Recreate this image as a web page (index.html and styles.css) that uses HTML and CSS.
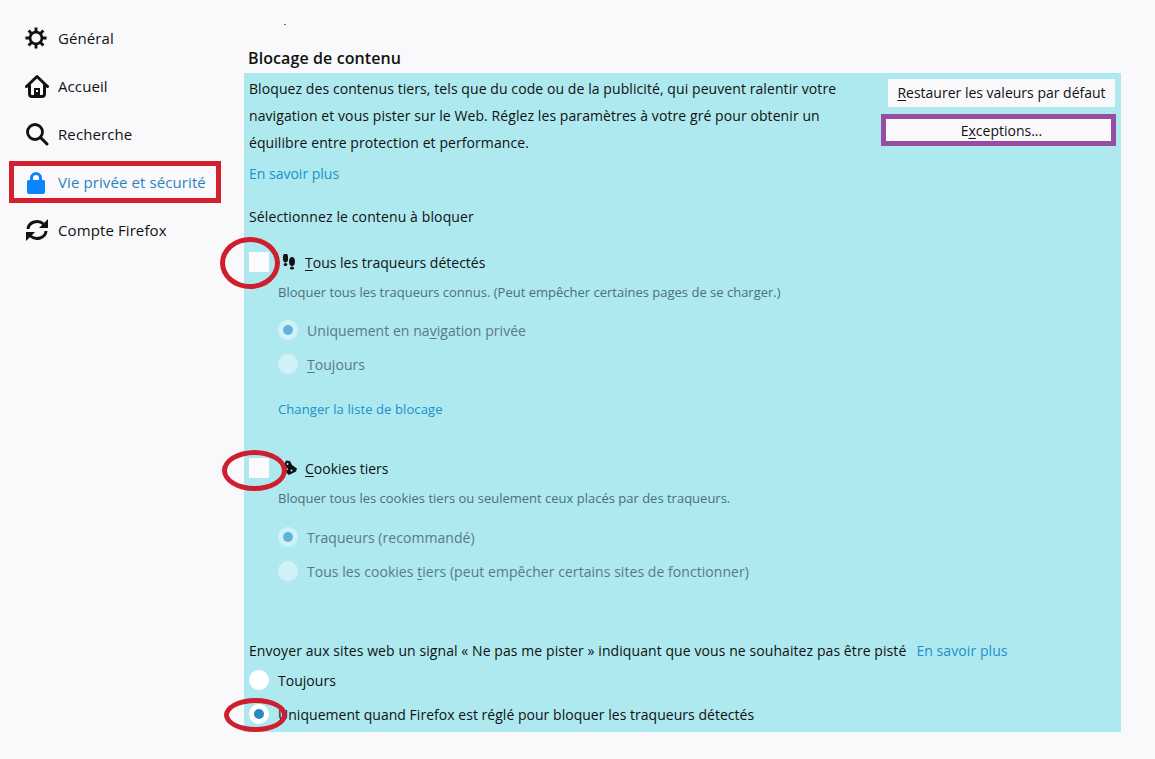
FILE: index.html
```html
<!DOCTYPE html>
<html>
   <head>
       <title>Vie privée et sécurité</title>
       <link rel="stylesheet" href="styles.css">
   </head>
   <body>
        <div class="page">
            <nav class="sidebar">
                <a class="nav_item">
                    <svg class="nav_icon" viewBox="0 0 24 24"><circle cx="12" cy="12" r="6.500" fill="none" stroke="#111" stroke-width="3"/><path stroke="#111" stroke-width="3.200" d="M12 .5v5M12 18.500v5M.5 12h5M18.500 12h5M3.900 3.900l3.500 3.500M16.600 16.600l3.500 3.500M3.900 20.100l3.500-3.500M16.600 7.400l3.500-3.500"/></svg>
                    <span>Général</span>
                </a>
                <a class="nav_item">
                    <svg class="nav_icon" viewBox="0 0 24 24"><path fill="none" stroke="#111" stroke-width="3" stroke-linejoin="round" stroke-linecap="round" d="M1.500 12.500 12 2.500l10.500 10"/><path fill="none" stroke="#111" stroke-width="3" d="M4.500 10.500v9.500a2.500 2.500 0 0 0 2.500 2.500h10a2.500 2.500 0 0 0 2.500-2.500v-9.500"/><path fill="#111" d="M9 14h6v8H9z"/><path fill="#f9f9fb" d="M11 16h2v2h-2z"/></svg>
                    <span>Accueil</span>
                </a>
                <a class="nav_item">
                    <svg class="nav_icon" viewBox="0 0 24 24"><circle cx="10" cy="10" r="7.500" fill="none" stroke="#111" stroke-width="2.800"/><path stroke="#111" stroke-width="3" stroke-linecap="round" d="M15.500 15.500 22 22"/></svg>
                    <span>Recherche</span>
                </a>
                <a class="nav_item nav_selected">
                    <svg class="nav_icon" viewBox="0 0 24 24"><path fill="#0a84ff" d="M6 10V8a6 6 0 0 1 12 0v2h1.500a1.500 1.500 0 0 1 1.500 1.500V22a2 2 0 0 1-2 2H5a2 2 0 0 1-2-2V11.500A1.500 1.500 0 0 1 4.500 10zm3 0h6V8a3 3 0 0 0-6 0z"/></svg>
                    <span>Vie privée et sécurité</span>
                </a>
                <a class="nav_item">
                    <svg class="nav_icon" viewBox="0 0 24 24"><path fill="none" stroke="#111" stroke-width="3" d="M3 11a9 8 0 0 1 15.500-5M21 13a9 8 0 0 1-15.500 5"/><path fill="#111" d="M23 1v9h-9zM1 23v-9h9z"/></svg>
                    <span>Compte Firefox</span>
                </a>
            </nav>

            <main class="content">
                <h2 class="section_title">Blocage de contenu</h2>
                <section class="panel">
                    <div class="intro">
                        <div class="intro_text">
                            <p class="description">Bloquez des contenus tiers, tels que du code ou de la publicité, qui peuvent ralentir votre navigation et vous pister sur le Web. Réglez les paramètres à votre gré pour obtenir un équilibre entre protection et performance.</p>
                            <a class="link learn_more">En savoir plus</a>
                        </div>
                        <div class="intro_buttons">
                            <div class="button"><u>R</u>estaurer les valeurs par défaut</div>
                            <div class="button button_marked">E<u>x</u>ceptions...</div>
                        </div>
                    </div>

                    <div class="choose_label">Sélectionnez le contenu à bloquer</div>

                    <div class="block_group trackers">
                        <div class="check_row">
                            <span class="checkbox"></span>
                            <svg class="row_icon" viewBox="0 0 16 16"><ellipse cx="3.500" cy="4" rx="2.600" ry="4.500" fill="#111"/><ellipse cx="3.500" cy="10.500" rx="1.800" ry="1.500" fill="#111"/><ellipse cx="10" cy="7.500" rx="2.900" ry="4.500" fill="#111"/><ellipse cx="10" cy="14" rx="2" ry="1.500" fill="#111"/></svg>
                            <span class="check_label"><u>T</u>ous les traqueurs détectés</span>
                        </div>
                        <div class="hint">Bloquer tous les traqueurs connus. (Peut empêcher certaines pages de se charger.)</div>
                        <div class="radio_row muted"><span class="radio radio_on"></span><span>Uniquement en na<u>v</u>igation privée</span></div>
                        <div class="radio_row muted"><span class="radio"></span><span><u>T</u>oujours</span></div>
                        <a class="link change_list">Changer la liste de blocage</a>
                    </div>

                    <div class="block_group cookies">
                        <div class="check_row">
                            <span class="checkbox"></span>
                            <svg class="row_icon" viewBox="0 0 16 16"><path fill="#111" d="M4 .5 8 1l2 4 5 3.500-1 3-7 3.500-4-3.500L1.500 6z"/><circle cx="5.500" cy="4" r=".9" fill="#ade9ef"/><circle cx="5" cy="9" r="1" fill="#ade9ef"/><circle cx="9.500" cy="10.500" r="1" fill="#ade9ef"/></svg>
                            <span class="check_label"><u>C</u>ookies tiers</span>
                        </div>
                        <div class="hint">Bloquer tous les cookies tiers ou seulement ceux placés par des traqueurs.</div>
                        <div class="radio_row muted"><span class="radio radio_on"></span><span>Traqueurs (recommandé)</span></div>
                        <div class="radio_row muted"><span class="radio"></span><span>Tous les cookies <u>t</u>iers (peut empêcher certains sites de fonctionner)</span></div>
                    </div>

                    <div class="dnt">
                        <div class="dnt_label"><span>Envoyer aux sites web un signal « Ne pas me pister » indiquant que vous ne souhaitez pas être pisté</span><a class="link">En savoir plus</a></div>
                        <div class="radio_row dnt_row"><span class="radio"></span><span>Toujours</span></div>
                        <div class="radio_row dnt_row"><span class="radio radio_strong"></span><span>Uniquement quand Firefox est réglé pour bloquer les traqueurs détectés</span></div>
                    </div>
                </section>
            </main>
        </div>

        <!-- annotation circles drawn over the screenshot -->
        <span class="ring ring1"></span>
        <span class="ring ring2"></span>
        <span class="ring ring3"></span>
        <span class="speck"></span>
    </body>
</html>
```

FILE: styles.css
```css
html, body {
  margin: 0;
  padding: 0;
}

body {
  position: relative;
  height: 759px;
  overflow: hidden;
  background-color: #f9f9fb;
  color: #111;
  font-family: "Open Sans", "Noto Sans", sans-serif;
  font-size: 14px;
}

u {
  text-underline-offset: 2px;
}

.page {
  display: flex;
}

.sidebar {
  width: 244px;
  padding: 14px 0 0 9px;
  box-sizing: border-box;
  flex-shrink: 0;
}

.nav_item {
  display: flex;
  align-items: center;
  gap: 9px;
  width: 212px;
  height: 48px;
  padding-left: 16px;
  box-sizing: border-box;
  font-size: 15px;
  letter-spacing: 0.1px;
}

.nav_icon {
  width: 24px;
  height: 24px;
  flex-shrink: 0;
}

.nav_item:first-child .nav_icon {
  width: 22px;
  height: 22px;
  margin-right: 2px;
}

.nav_selected {
  height: 42px;
  margin: 3px 0;
  padding-left: 10px;
  gap: 10px;
  border: 5px solid #d3202f;
  color: #2b83bd;
}

.content {
  width: 877px;
}

.section_title {
  margin: 0;
  padding: 48px 0 0 4px;
  height: 25px;
  font-size: 16px;
  font-weight: 600;
  letter-spacing: 0.1px;
  line-height: 20px;
}

.panel {
  height: 659px;
  padding-left: 5px;
  box-sizing: border-box;
  background-color: #ade9ef;
}

.intro {
  display: flex;
  justify-content: space-between;
}

.intro_text {
  width: 600px;
  padding-top: 2px;
}

.description {
  margin: 0;
  line-height: 27px;
  letter-spacing: 0.08px;
}

.link {
  color: #1c8fce;
}

.learn_more {
  display: block;
  margin-top: 8px;
  line-height: 20px;
}

.intro_buttons {
  display: flex;
  flex-direction: column;
  align-items: flex-end;
  gap: 7px;
  padding: 6px 5px 0 0;
}

.button {
  background-color: #f9f9fb;
  text-align: center;
  line-height: 28px;
  width: 227px;
  margin-right: 1px;
}

.button_marked {
  width: 235px;
  margin-right: 0;
  padding: 1px 0 0 6px;
  box-sizing: border-box;
  border: 5px solid #974ea2;
  line-height: 21px;
}

.choose_label {
  margin-top: 23px;
  line-height: 20px;
  letter-spacing: 0.12px;
}

.trackers {
  margin-top: 25px;
}

.cookies {
  margin-top: 39px;
}

.check_row {
  display: flex;
  align-items: center;
  height: 20px;
}

.checkbox {
  width: 20px;
  height: 20px;
  background-color: #fbfbfd;
  flex-shrink: 0;
}

.row_icon {
  width: 16px;
  height: 16px;
  margin: 0 7px 0 13px;
  flex-shrink: 0;
}

.hint {
  margin: 10px 0 0 29px;
  font-size: 13px;
  line-height: 20px;
  color: #4e6f78;
}

.radio_row {
  display: flex;
  align-items: center;
  gap: 9px;
  height: 20px;
  margin-left: 29px;
  margin-top: 14px;
  letter-spacing: 0.05px;
}

.trackers .hint + .radio_row {
  margin-top: 18px;
}

.cookies .hint + .radio_row {
  margin-top: 19px;
}

.muted {
  color: #5a7a82;
}

.radio {
  width: 20px;
  height: 20px;
  border-radius: 50%;
  background-color: #d2f1f5;
  flex-shrink: 0;
  display: flex;
  align-items: center;
  justify-content: center;
}

.radio_on::after,
.radio_strong::after {
  content: "";
  width: 10px;
  height: 10px;
  border-radius: 50%;
  background-color: #62b3dc;
}

.change_list {
  display: block;
  margin: 25px 0 0 29px;
  font-size: 13px;
  letter-spacing: 0.1px;
  line-height: 20px;
}

.dnt {
  margin-top: 60px;
}

.dnt_label {
  display: flex;
  gap: 10px;
  line-height: 20px;
  letter-spacing: 0.08px;
}

.dnt_row {
  margin-left: 0;
  gap: 9px;
  margin-top: 14px;
  letter-spacing: 0.03px;
}

.dnt_label + .dnt_row {
  margin-top: 9px;
}

.dnt_row .radio {
  background-color: #fff;
}

.radio_strong::after {
  background-color: #2a88c6;
}

.ring {
  position: absolute;
  box-sizing: border-box;
  border: 5px solid #cf1f2e;
  border-radius: 50%;
}

.ring1 {
  left: 220px;
  top: 237px;
  width: 60px;
  height: 52px;
}

.ring2 {
  left: 222px;
  top: 450px;
  width: 65px;
  height: 41px;
}

.ring3 {
  left: 224px;
  top: 698px;
  width: 63px;
  height: 34px;
}

.speck {
  position: absolute;
  left: 284px;
  top: 24px;
  width: 2px;
  height: 1px;
  background-color: #666;
}
```
